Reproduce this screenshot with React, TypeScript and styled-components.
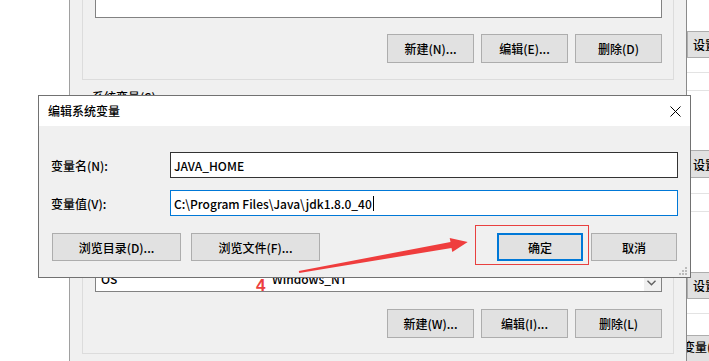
import React from "react";
import styled, { createGlobalStyle } from "styled-components";

const UI_FONT = `"Noto Sans CJK SC", "Noto Sans", sans-serif`;

const GlobalStyle = createGlobalStyle`
  * { box-sizing: border-box; }
  html, body { margin: 0; padding: 0; }
  body {
    width: 709px;
    height: 361px;
    overflow: hidden;
    background: #ffffff;
    font-family: ${UI_FONT};
    font-size: 12px;
    font-weight: 500;
    color: #000000;
  }
`;

const Page = styled.div`
  position: relative;
  width: 709px;
  height: 361px;
  overflow: hidden;
  display: flex;
  align-items: stretch;
`;

const Gutter = styled.div`
  width: 69px;
  flex: none;
  background: #ffffff;
`;

/* ---------- background: 环境变量 window ---------- */

const EnvWindow = styled.div`
  width: 618px;
  flex: none;
  background: #f0f0f0;
  border-left: 1px solid #a0a0a0;
  border-right: 1px solid #8a8a8a;
  padding: 0 12px;
  display: flex;
  flex-direction: column;
`;

const GroupBox = styled.div<{ $height: number; $top: number; $padTop: number }>`
  position: relative;
  flex: none;
  height: ${(p) => p.$height}px;
  margin-top: ${(p) => p.$top}px;
  border: 1px solid #dcdcdc;
  padding: ${(p) => p.$padTop}px 11px 15px 12px;
  display: flex;
  flex-direction: column;
`;

const Legend = styled.span`
  position: absolute;
  left: 8px;
  top: -10px;
  padding: 0 1px;
  background: #f0f0f0;
  line-height: 16px;
`;

const ListBox = styled.div<{ $height?: number }>`
  flex: ${(p) => (p.$height ? "none" : "1")};
  height: ${(p) => (p.$height ? `${p.$height}px` : "auto")};
  background: #ffffff;
  border: 1px solid #828282;
  display: flex;
  overflow: hidden;
`;

const ListRows = styled.div`
  flex: 1;
  display: flex;
  flex-direction: column;
  justify-content: flex-end;
  padding: 0 0 4px 5px;
`;

const ListRow = styled.div`
  display: flex;
  height: 16px;
  line-height: 16px;
  white-space: nowrap;
`;

const KeyCell = styled.span`
  width: 171px;
  flex: none;
`;

const ScrollBar = styled.div`
  width: 17px;
  flex: none;
  background: #f0f0f0;
  display: flex;
  flex-direction: column;
  justify-content: flex-end;
`;

const ScrollArrow = styled.div`
  height: 17px;
  display: flex;
  align-items: center;
  justify-content: center;
  padding-right: 3px;
`;

const ButtonRow = styled.div<{ $top: number }>`
  margin-top: ${(p) => p.$top}px;
  display: flex;
  justify-content: flex-end;
  gap: 7px;
`;

const WinButton = styled.div`
  width: 87px;
  height: 29px;
  background: #e1e1e1;
  border: 1px solid #adadad;
  display: flex;
  align-items: center;
  justify-content: center;
  white-space: nowrap;
`;

/* ---------- far right: 系统属性 window ---------- */

const SideStrip = styled.div`
  flex: 1;
  min-width: 0;
  background: #ffffff;
  display: flex;
  flex-direction: column;
  overflow: hidden;
`;

const SideButton = styled.div<{ $top: number; $h: number }>`
  flex: none;
  margin-top: ${(p) => p.$top}px;
  height: ${(p) => p.$h}px;
  background: #e1e1e1;
  border: 1px solid #adadad;
  border-right: none;
  padding-left: 5px;
  display: flex;
  align-items: center;
  white-space: nowrap;
`;

const SideRule = styled.div<{ $top: number }>`
  flex: none;
  margin-top: ${(p) => p.$top}px;
  height: 1px;
  background: #e3e3e3;
`;

const SideTab = styled.div<{ $top: number }>`
  flex: 1;
  margin-top: ${(p) => p.$top}px;
  background: #e1e1e1;
  border-top: 1px solid #adadad;
  padding-top: 2px;
  white-space: nowrap;
  text-indent: -4px;
`;

/* ---------- 编辑系统变量 dialog (floats over the window) ---------- */

const Dialog = styled.div`
  position: absolute;
  left: 38px;
  top: 95px;
  width: 653px;
  height: 183px;
  border: 1px solid #717171;
  background: #f0f0f0;
  display: flex;
  flex-direction: column;
`;

const TitleBar = styled.div`
  height: 30px;
  flex: none;
  background: #ffffff;
  display: flex;
  align-items: center;
  padding-left: 9px;
`;

const Title = styled.span`
  flex: 1;
  line-height: 16px;
`;

const CloseButton = styled.div`
  width: 28px;
  height: 30px;
  margin-right: 1px;
  display: flex;
  align-items: center;
  justify-content: center;
`;

const DialogBody = styled.div`
  flex: 1;
  padding: 26px 12px 16px 12px;
  display: flex;
  flex-direction: column;
`;

const FieldRow = styled.div<{ $top: number }>`
  margin-top: ${(p) => p.$top}px;
  height: 26px;
  display: flex;
  align-items: center;
`;

const FieldLabel = styled.span`
  width: 119px;
  flex: none;
`;

const TextField = styled.div<{ $focused?: boolean }>`
  flex: 1;
  height: 26px;
  background: #ffffff;
  border: 1px solid ${(p) => (p.$focused ? "#0078d7" : "#333333")};
  padding: 0 3px;
  display: flex;
  align-items: center;
  white-space: nowrap;
`;

const Caret = styled.span`
  display: inline-block;
  width: 1px;
  height: 15px;
  margin-left: 1px;
  background: #000000;
`;

const DialogButtons = styled.div`
  margin-top: 17px;
  height: 28px;
  display: flex;
  justify-content: space-between;
`;

const ButtonGroup = styled.div<{ $gap: number; $side: "left" | "right" }>`
  display: flex;
  gap: ${(p) => p.$gap}px;
  ${(p) => (p.$side === "left" ? "padding-left: 1px;" : "padding-right: 1px;")}
`;

const DlgButton = styled.div<{ $w: number; $default?: boolean }>`
  width: ${(p) => p.$w}px;
  height: 28px;
  background: #e1e1e1;
  border: ${(p) => (p.$default ? "2px solid #0078d7" : "1px solid #adadad")};
  display: flex;
  align-items: center;
  justify-content: center;
  white-space: nowrap;
`;

const Grip = styled.svg`
  position: absolute;
  right: 2px;
  bottom: 1px;
`;

/* ---------- red annotations ---------- */

const Highlight = styled.div`
  position: absolute;
  left: 475px;
  top: 225px;
  width: 114px;
  height: 40px;
  border: 1px solid #e8403f;
`;

const StepNumber = styled.span`
  position: absolute;
  left: 256px;
  top: 277px;
  font-family: "Liberation Sans", Arial, sans-serif;
  font-size: 17px;
  font-weight: 700;
  line-height: 17px;
  color: #ec3f3f;
`;

const Overlay = styled.svg`
  position: absolute;
  left: 0;
  top: 0;
  pointer-events: none;
`;

export default function App() {
  return (
    <>
      <GlobalStyle />
      <Page>
        <Gutter />
        <EnvWindow>
          <GroupBox $height={101} $top={-21} $padTop={0}>
            <ListBox $height={38} />
            <ButtonRow $top={16}>
              <WinButton>新建(N)...</WinButton>
              <WinButton>编辑(E)...</WinButton>
              <WinButton>删除(D)</WinButton>
            </ButtonRow>
          </GroupBox>
          <GroupBox $height={256} $top={18} $padTop={16}>
            <Legend>系统变量(S)</Legend>
            <ListBox>
              <ListRows>
                <ListRow>
                  <KeyCell>NUMBER_OF_PROCESSORS</KeyCell>
                  <span>4</span>
                </ListRow>
                <ListRow>
                  <KeyCell>OS</KeyCell>
                  <span>Windows_NT</span>
                </ListRow>
              </ListRows>
              <ScrollBar>
                <ScrollArrow>
                  <svg width="9" height="6" viewBox="0 0 9 6">
                    <polyline points="0.5,0.8 4.5,4.8 8.5,0.8" fill="none" stroke="#606060" strokeWidth="1.4" />
                  </svg>
                </ScrollArrow>
              </ScrollBar>
            </ListBox>
            <ButtonRow $top={17}>
              <WinButton>新建(W)...</WinButton>
              <WinButton>编辑(I)...</WinButton>
              <WinButton>删除(L)</WinButton>
            </ButtonRow>
          </GroupBox>
        </EnvWindow>
        <SideStrip>
          <SideButton $top={31} $h={27}>设置(S)...</SideButton>
          <SideRule $top={14} />
          <SideRule $top={17} />
          <SideButton $top={59} $h={28}>设置(E)...</SideButton>
          <SideRule $top={15} />
          <SideRule $top={17} />
          <SideButton $top={60} $h={27}>设置(T)...</SideButton>
          <SideRule $top={14} />
          <SideTab $top={21}>变量(N)...</SideTab>
        </SideStrip>

        <Dialog>
          <TitleBar>
            <Title>编辑系统变量</Title>
            <CloseButton>
              <svg width="11" height="11" viewBox="0 0 11 11">
                <path d="M0.5 0.5 L10.5 10.5 M10.5 0.5 L0.5 10.5" stroke="#000" strokeWidth="1" />
              </svg>
            </CloseButton>
          </TitleBar>
          <DialogBody>
            <FieldRow $top={0}>
              <FieldLabel>变量名(N):</FieldLabel>
              <TextField>JAVA_HOME</TextField>
            </FieldRow>
            <FieldRow $top={12}>
              <FieldLabel>变量值(V):</FieldLabel>
              <TextField $focused>
                C:\Program Files\Java\jdk1.8.0_40
                <Caret />
              </TextField>
            </FieldRow>
            <DialogButtons>
              <ButtonGroup $gap={10} $side="left">
                <DlgButton $w={129}>浏览目录(D)...</DlgButton>
                <DlgButton $w={129}>浏览文件(F)...</DlgButton>
              </ButtonGroup>
              <ButtonGroup $gap={8} $side="right">
                <DlgButton $w={86} $default>确定</DlgButton>
                <DlgButton $w={86}>取消</DlgButton>
              </ButtonGroup>
            </DialogButtons>
          </DialogBody>
          <Grip width="10" height="10" viewBox="0 0 10 10">
            <g fill="#bcbcbc">
              <rect x="7" y="1" width="2" height="2" />
              <rect x="4" y="4" width="2" height="2" />
              <rect x="7" y="4" width="2" height="2" />
              <rect x="1" y="7" width="2" height="2" />
              <rect x="4" y="7" width="2" height="2" />
              <rect x="7" y="7" width="2" height="2" />
            </g>
          </Grip>
        </Dialog>

        <Highlight />
        <StepNumber>4</StepNumber>
        <Overlay width="709" height="361" viewBox="0 0 709 361">
          <polygon
            points="298.8,271.0 450.5,242.0 449.7,237.9 467.7,242.0 452.3,252.1 451.5,248.0 299.2,273.0"
            fill="#ef3d3d"
          />
        </Overlay>
      </Page>
    </>
  );
}
